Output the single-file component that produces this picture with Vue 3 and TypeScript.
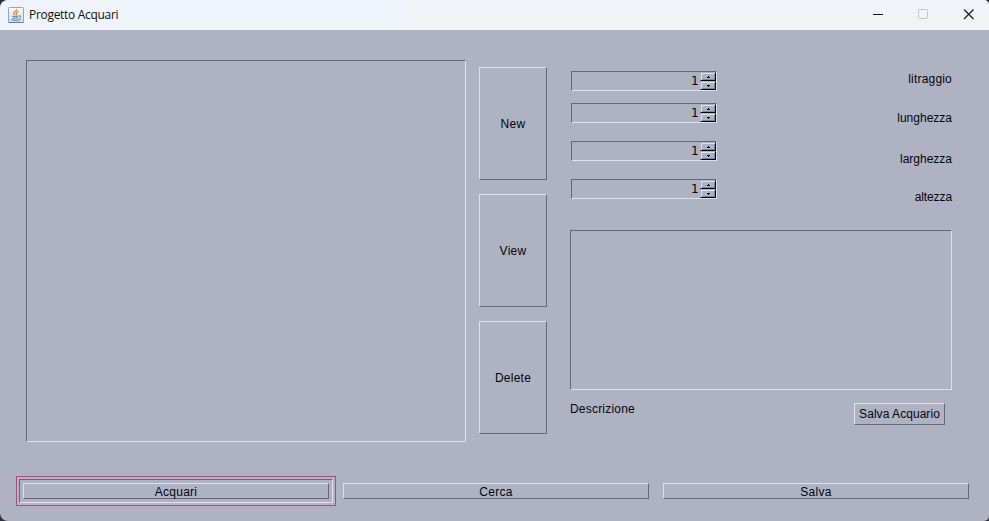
<script setup lang="ts">
import { ref } from 'vue'

interface Measure {
  name: string
  value: number
}

const measures = ref<Measure[]>([
  { name: 'litraggio', value: 1 },
  { name: 'lunghezza', value: 1 },
  { name: 'larghezza', value: 1 },
  { name: 'altezza', value: 1 },
])
const actions: string[] = ['New', 'View', 'Delete']
const tabs: string[] = ['Acquari', 'Cerca', 'Salva']
const activeTab = ref('Acquari')

function step(m: Measure, delta: number): void {
  m.value = Math.max(1, m.value + delta)
}
</script>

<template>
  <div class="window">
    <header class="titlebar">
      <svg class="app-icon" width="16" height="16" viewBox="0 0 16 16">
        <defs>
          <linearGradient id="tile" x1="0" y1="0" x2="0" y2="1">
            <stop offset="0" stop-color="#f8fafb" />
            <stop offset="1" stop-color="#cfdbe4" />
          </linearGradient>
        </defs>
        <rect x="0.5" y="0.5" width="15" height="15" rx="1" fill="url(#tile)" stroke="#8fa6b8" />
        <path d="M0.5 15.5h15" stroke="#5d7f9e" />
        <path d="M8.8 2C9.4 4 5 4.800 5.800 6.500C6.100 7.200 6.800 7.700 7.100 8.500M10.700 4.300C8.800 4.900 7.600 5.800 8.500 6.900C9 7.500 8.600 8.200 8.100 8.600" fill="none" stroke="#e58a3c" stroke-width="1.300" />
        <path d="M4.200 9.200C5.500 9.800 8.700 9.700 10.400 9.200M4.900 10.900C6.500 11.500 8.500 11.400 10 10.900M11 8.800C13.400 8.300 13.200 10.700 11 11.300M3.200 12.300C4.500 13.700 10.500 13.800 12.400 12.300" fill="none" stroke="#55809f" stroke-width="1" />
      </svg>
      <span class="title">Progetto Acquari</span>
      <div class="controls">
        <svg width="46" height="30" viewBox="0 0 46 30"><path d="M14 14.500h10" stroke="#111" /></svg>
        <svg width="46" height="30" viewBox="0 0 46 30"><rect x="13.500" y="9.500" width="9" height="9" rx="0.800" fill="none" stroke="#c2c4ca" /></svg>
        <svg width="46" height="30" viewBox="0 0 46 30"><path d="M13 9.500l9.500 9.500M22.500 9.500l-9.500 9.500" stroke="#1a1a1c" stroke-width="1.150" /></svg>
      </div>
    </header>

    <main class="content">
      <section class="list sunken"></section>

      <nav class="actions">
        <button v-for="a in actions" :key="a" class="btn raised">{{ a }}</button>
      </nav>

      <section class="details">
        <div class="measures">
          <div class="spinners">
            <div v-for="m in measures" :key="m.name" class="spinner sunken">
              <span class="value">{{ m.value }}</span>
              <div class="arrows">
                <button class="arrow" @click="step(m, 1)">
                  <svg width="3" height="2" viewBox="0 0 3 2"><path d="M1 0h1v1h1v1H0V1h1z" fill="#0b0b18" /></svg>
                </button>
                <button class="arrow" @click="step(m, -1)">
                  <svg width="3" height="2" viewBox="0 0 3 2"><path d="M0 0h3v1H2v1H1V1H0z" fill="#0b0b18" /></svg>
                </button>
              </div>
            </div>
          </div>
          <div class="labels">
            <span v-for="m in measures" :key="m.name">{{ m.name }}</span>
          </div>
        </div>
        <div class="description sunken"></div>
        <div class="save-row">
          <span class="caption">Descrizione</span>
          <button class="btn raised save">Salva Acquario</button>
        </div>
      </section>
    </main>

    <footer class="tabs">
      <div v-for="t in tabs" :key="t" class="tab" :class="{ active: t === activeTab }" @click="activeTab = t">
        <div class="well">
          <button class="btn raised">{{ t }}</button>
        </div>
      </div>
    </footer>
  </div>
</template>

<style>
body {
  background: #303138;
}
</style>

<style scoped>
* {
  box-sizing: border-box;
}
.window {
  width: 989px;
  height: 521px;
  display: flex;
  flex-direction: column;
  background: #aeb2c3;
  border-radius: 8px 5px 5px 8px;
  overflow: hidden;
  font-family: "Liberation Sans", sans-serif;
  font-size: 12px;
  letter-spacing: 0.25px;
  line-height: 14px;
  color: #05050e;
}
.titlebar {
  height: 30px;
  flex: none;
  display: flex;
  align-items: center;
  padding-left: 8px;
  background: linear-gradient(90deg, #eff3fc 0, #eff3fc 370px, #f1f3f9 410px);
}
.app-icon {
  margin-top: -1px;
}
.title {
  margin-left: 5px;
  font-family: "Open Sans", "Noto Sans", sans-serif;
  font-size: 12px;
  letter-spacing: -0.3px;
  color: #111;
}
.controls {
  margin-left: auto;
  margin-right: -8px;
  display: flex;
}
.sunken {
  border: 1px solid;
  border-color: #62677a #dde0ed #dde0ed #62677a;
}
.raised {
  border: 1px solid;
  border-color: #dde0ed #62677a #62677a #dde0ed;
}
.btn {
  display: flex;
  align-items: center;
  justify-content: center;
  padding: 0;
  background: none;
  font: inherit;
  letter-spacing: inherit;
  color: inherit;
}
.content {
  height: 446px;
  flex: none;
  display: flex;
  align-items: flex-start;
  padding: 30px 37px 0 26px;
}
.list {
  width: 440px;
  height: 382px;
}
.actions {
  margin: 7px 23px 0 13px;
  width: 68px;
  display: grid;
  grid-template-rows: repeat(3, 113px);
  gap: 14px;
}
.details {
  width: 382px;
}
.measures {
  height: 170px;
  display: flex;
  justify-content: space-between;
}
.spinners {
  padding: 11px 0 0 1px;
}
.spinner {
  width: 146px;
  height: 20px;
  margin-bottom: 18px;
  display: flex;
  justify-content: flex-end;
}
.spinner:first-child {
  margin-bottom: 12px;
}
.value {
  margin-right: 1px;
  font-family: "DejaVu Sans", sans-serif;
  font-size: 12px;
  line-height: 18px;
}
.arrows {
  width: 16px;
  height: 18px;
}
.arrow {
  width: 16px;
  height: 9px;
  display: flex;
  align-items: center;
  justify-content: center;
  padding: 0;
  background: #aeb2c3;
  border: 1px solid;
  border-color: #aeb2c3 #05050e #05050e #aeb2c3;
  box-shadow: inset 1px 1px #dde0ed, inset -1px -1px #80859a;
}
.labels {
  display: flex;
  flex-direction: column;
  text-align: right;
  letter-spacing: 0;
  padding-top: 12px;
}
.labels span {
  height: 14px;
  margin-bottom: 25px;
}
.labels span:first-child {
  letter-spacing: 0.2px;
}
.labels span:nth-child(2) {
  margin-bottom: 27px;
}
.labels span:nth-child(3) {
  margin-bottom: 24px;
}
.labels span:last-child {
  letter-spacing: -0.1px;
}
.description {
  height: 160px;
}
.save-row {
  display: flex;
  justify-content: space-between;
  padding: 13px 7px 0 0;
}
.caption {
  margin-top: -1px;
  letter-spacing: 0.2px;
}
.save {
  width: 91px;
  height: 22px;
  letter-spacing: 0.05px;
}
.tabs {
  display: flex;
  padding-left: 16px;
}
.tab {
  width: 320px;
  height: 30px;
  padding: 3px;
}
.tab.active {
  border: 1px solid #a05478;
  padding: 2px;
  background: #c0aec4;
}
.well {
  height: 24px;
  padding: 4px;
}
.active .well {
  width: 314px;
  padding: 3px;
  background: #aeb2c3;
  border: 1px solid;
  border-color: #62677a #dde0ed #dde0ed #62677a;
}
.tab .btn {
  width: 306px;
  height: 16px;
  padding-top: 1px;
}
</style>
